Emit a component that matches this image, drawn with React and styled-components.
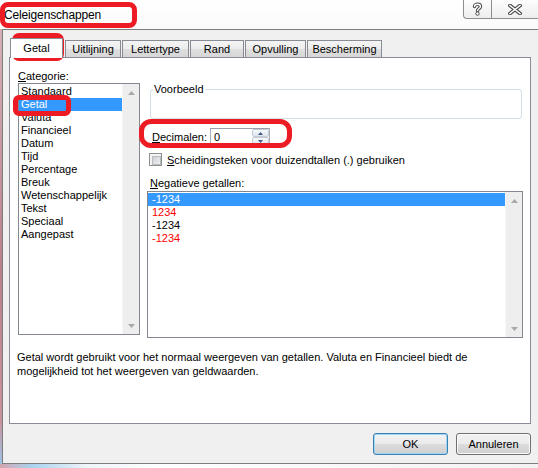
import React from 'react'
import styled, { createGlobalStyle, css } from 'styled-components'

const GlobalStyle = createGlobalStyle`
  * {
    box-sizing: border-box;
  }

  html,
  body {
    margin: 0;
    background: #ffffff;
  }
`

const uiFont = `"Liberation Sans", Arial, sans-serif`

const Screen = styled.div`
  position: relative;
  width: 538px;
  height: 468px;
  overflow: hidden;
  background: #ffffff;
  font-family: ${uiFont};
  font-size: 11px;
  color: #000000;
`

const TitleBar = styled.div`
  height: 29px;
  display: flex;
  justify-content: space-between;
  align-items: flex-start;
  background: linear-gradient(#ffffff, #fafafa);
`

const Title = styled.div`
  padding: 1px 0 0 4px;
  line-height: 28px;
  font-size: 12px;
  letter-spacing: -0.15px;
  color: #000000;
`

const CaptionButtons = styled.div`
  display: flex;
  height: 19px;
`

const CaptionButton = styled.div`
  width: ${({ $width }) => $width}px;
  height: 19px;
  display: flex;
  align-items: center;
  justify-content: center;
  border: 1px solid #8d8d8d;
  border-top: none;
  background: linear-gradient(#fdfdfd, #eeeeee);

  ${({ $first }) =>
    $first
      ? css`
          border-bottom-left-radius: 4px;
        `
      : css`
          border-left: none;
          border-right: none;
        `}
`

const FrameRow = styled.div`
  display: flex;
  height: 435px;
`

const FrameEdge = styled.div`
  width: 2px;
  background: linear-gradient(#d6b0b8, #b9808c 55%, #c8929d 90%, #9fc4e6);
`

const WindowBody = styled.div`
  flex: 1;
  display: flex;
  flex-direction: column;
  padding-left: 6px;
  background: #f0f0f0;
  border-top: 1px solid #7d7d7d;
  border-left: 1px solid #7d7d7d;
  border-bottom: 1px solid #7d7d7d;
`

const TabStrip = styled.div`
  height: 27px;
  display: flex;
  align-items: flex-end;
  padding-left: 1px;
  gap: 1px;
`

const Tab = styled.div`
  width: ${({ $width }) => $width}px;
  height: 17px;
  display: flex;
  align-items: center;
  justify-content: center;
  border: 1px solid #898c95;
  border-bottom: none;
  background: linear-gradient(#f4f4f4, #ececec 50%, #dfdfdf 52%, #d6d6d6);
  white-space: nowrap;

  ${({ $active }) =>
    $active &&
    css`
      position: relative;
      z-index: 1;
      height: 20px;
      margin: 0 1px -1px 0;
      padding-bottom: 1px;
      background: #ffffff;
    `}
`

const TabPanel = styled.div`
  width: 522px;
  height: 367px;
  padding: 11px 0 0 8px;
  background: #ffffff;
  border: 1px solid #898c95;
`

const Columns = styled.div`
  display: flex;
  gap: 7px;
`

const LeftColumn = styled.div`
  width: 122px;
  display: flex;
  flex-direction: column;
`

const RightColumn = styled.div`
  width: 376px;
  display: flex;
  flex-direction: column;
`

const FieldLabel = styled.div`
  line-height: 14px;
  height: 14px;
  margin-left: ${({ $indent }) => $indent || 0}px;
  margin-top: ${({ $top }) => $top || 0}px;
  white-space: nowrap;
`

const ListBox = styled.div`
  width: ${({ $width }) => $width}px;
  height: ${({ $height }) => $height}px;
  margin-top: ${({ $top }) => $top || 0}px;
  display: flex;
  border: 1px solid #828790;
  background: #ffffff;
`

const ListItems = styled.div`
  flex: 1;
  padding-top: 1px;
`

const ListRow = styled.div`
  height: 13px;
  line-height: 13px;
  padding-left: ${({ $indent }) => $indent}px;
  white-space: nowrap;
  color: ${({ $red }) => ($red ? '#ff0000' : '#000000')};

  ${({ $selected }) =>
    $selected &&
    css`
      background: #3399ff;
      color: #ffffff;
    `}
`

const ScrollBar = styled.div`
  width: 17px;
  display: flex;
  flex-direction: column;
  justify-content: space-between;
  background: #eeeeee;
  border-left: 1px solid #f6f6f6;
`

const ScrollArrow = styled.div`
  height: 17px;
  display: flex;
  align-items: center;
  justify-content: center;
`

const GroupBox = styled.fieldset`
  height: 36px;
  margin: 14px 1px 0 3px;
  padding: 0;
  border: 1px solid #d5dfe5;
  border-radius: 3px;

  legend {
    margin-left: 2px;
    padding: 0 1px;
    line-height: 13px;
    font-size: 11px;
  }
`

const DecimalRow = styled.div`
  height: 18px;
  margin-top: 9px;
  display: flex;
  align-items: center;

  label {
    width: 58px;
    margin-left: 5px;
  }
`

const SpinBox = styled.div`
  width: 60px;
  height: 18px;
  display: flex;
  justify-content: space-between;
  border: 1px solid #a9afb8;
  border-top-color: #9aa1ab;
  background: #ffffff;

  span {
    padding-left: 3px;
    line-height: 16px;
  }
`

const SpinButtons = styled.div`
  width: 17px;
  display: flex;
  flex-direction: column;
`

const SpinButton = styled.div`
  height: 8px;
  display: flex;
  align-items: center;
  justify-content: center;
  border: 1px solid #c4cbd6;
  border-radius: 2px;
  background: linear-gradient(#f7f9fc, #dde4ee);
`

const CheckRow = styled.div`
  height: 13px;
  margin-top: 7px;
  display: flex;
  align-items: center;
  gap: 5px;
  padding-left: 2px;
  white-space: nowrap;
`

const CheckBox = styled.div`
  width: 13px;
  height: 13px;
  padding: 2px;
  border: 1px solid #8e8f8f;
  background: #f4f4f4;

  &::after {
    content: '';
    display: block;
    width: 7px;
    height: 7px;
    border: 1px solid #b9bcc1;
    background: linear-gradient(135deg, #cdd0d5, #eff0f2);
  }
`

const Description = styled.p`
  margin: 12px 0 0 -1px;
  line-height: 14px;
  white-space: nowrap;
`

const ButtonRow = styled.div`
  width: 522px;
  margin-top: 9px;
  display: flex;
  justify-content: flex-end;
  gap: 8px;
`

const DialogButton = styled.button`
  width: 75px;
  height: 22px;
  padding: 0;
  font-family: ${uiFont};
  font-size: 11px;
  color: #000000;
  border: 1px solid ${({ $default }) => ($default ? '#3c7fb1' : '#707070')};
  border-radius: 3px;
  background: linear-gradient(#f2f2f2, #ebebeb 48%, #dddddd 50%, #cfcfcf);
  box-shadow: inset 0 0 0 1px ${({ $default }) => ($default ? '#9fd6f3' : '#fbfbfb')};
`

const BottomGlass = styled.div`
  height: 4px;
  background: linear-gradient(to right, #d2a6b0, #a9d3f0 6%, #eef4f8 16%, #ffffff 30%, #f2f2f2);
`

// red annotation marks drawn over the screenshot
const RedMark = styled.div`
  position: absolute;
  left: ${({ $x }) => $x}px;
  top: ${({ $y }) => $y}px;
  width: ${({ $w }) => $w}px;
  height: ${({ $h }) => $h}px;
  border: 5px solid #ed1c24;
  border-radius: ${({ $r }) => $r || 7}px;
  pointer-events: none;
`

const HelpGlyph = () => (
  <svg width="11" height="14" viewBox="0 0 11 14">
    <path
      d="M2.5 4.5 C2.5 1.5 8.5 1.5 8.5 4.5 C8.5 6.5 5.5 6.6 5.5 8.8"
      fill="none"
      stroke="#4a4a4a"
      strokeWidth="3.4"
      strokeLinecap="round"
    />
    <path
      d="M2.5 4.5 C2.5 1.5 8.5 1.5 8.5 4.5 C8.5 6.5 5.5 6.6 5.5 8.8"
      fill="none"
      stroke="#ffffff"
      strokeWidth="1.4"
      strokeLinecap="round"
    />
    <circle cx="5.5" cy="11.6" r="1.7" fill="#ffffff" stroke="#4a4a4a" strokeWidth="1" />
  </svg>
)

const CloseGlyph = () => (
  <svg width="14" height="11" viewBox="0 0 14 11">
    <path d="M2 1.5 L12 9.5 M12 1.5 L2 9.5" stroke="#4a4a4a" strokeWidth="3.6" strokeLinecap="square" />
    <path d="M2 1.5 L12 9.5 M12 1.5 L2 9.5" stroke="#ffffff" strokeWidth="1.6" strokeLinecap="square" />
  </svg>
)

const Arrow = ({ down, color = '#a8a8a8', w = 7, h = 4 }) => (
  <svg width={w} height={h} viewBox={`0 0 ${w} ${h}`}>
    <polygon
      points={down ? `0,0 ${w},0 ${w / 2},${h}` : `0,${h} ${w},${h} ${w / 2},0`}
      fill={color}
    />
  </svg>
)

const categories = [
  'Standaard',
  'Getal',
  'Valuta',
  'Financieel',
  'Datum',
  'Tijd',
  'Percentage',
  'Breuk',
  'Wetenschappelijk',
  'Tekst',
  'Speciaal',
  'Aangepast',
]

const negatives = [
  { text: '-1234', selected: true },
  { text: '1234', red: true },
  { text: '-1234' },
  { text: '-1234', red: true },
]

const tabs = [
  { label: 'Getal', width: 53, active: true },
  { label: 'Uitlijning', width: 56 },
  { label: 'Lettertype', width: 67 },
  { label: 'Rand', width: 54 },
  { label: 'Opvulling', width: 61 },
  { label: 'Bescherming', width: 75 },
]

const Scroller = () => (
  <ScrollBar>
    <ScrollArrow>
      <Arrow />
    </ScrollArrow>
    <ScrollArrow>
      <Arrow down />
    </ScrollArrow>
  </ScrollBar>
)

const App = () => {
  return (
    <Screen>
      <GlobalStyle />
      <TitleBar>
        <Title>Celeigenschappen</Title>
        <CaptionButtons>
          <CaptionButton $width={29} $first>
            <HelpGlyph />
          </CaptionButton>
          <CaptionButton $width={46}>
            <CloseGlyph />
          </CaptionButton>
        </CaptionButtons>
      </TitleBar>

      <FrameRow>
        <FrameEdge />
        <WindowBody>
          <TabStrip>
            {tabs.map((tab) => (
              <Tab key={tab.label} $width={tab.width} $active={tab.active}>
                {tab.label}
              </Tab>
            ))}
          </TabStrip>

          <TabPanel>
            <Columns>
              <LeftColumn>
                <FieldLabel>
                  <u>C</u>ategorie:
                </FieldLabel>
                <ListBox $width={122} $height={252}>
                  <ListItems>
                    {categories.map((item) => (
                      <ListRow key={item} $indent={2} $selected={item === 'Getal'}>
                        {item}
                      </ListRow>
                    ))}
                  </ListItems>
                  <Scroller />
                </ListBox>
              </LeftColumn>

              <RightColumn>
                <GroupBox>
                  <legend>Voorbeeld</legend>
                </GroupBox>

                <DecimalRow>
                  <label>
                    <u>D</u>ecimalen:
                  </label>
                  <SpinBox>
                    <span>0</span>
                    <SpinButtons>
                      <SpinButton>
                        <Arrow color="#3f5a84" w={5} h={3} />
                      </SpinButton>
                      <SpinButton>
                        <Arrow down color="#3f5a84" w={5} h={3} />
                      </SpinButton>
                    </SpinButtons>
                  </SpinBox>
                </DecimalRow>

                <CheckRow>
                  <CheckBox />
                  <span>
                    <u>S</u>cheidingsteken voor duizendtallen (.) gebruiken
                  </span>
                </CheckRow>

                <FieldLabel $indent={3} $top={10}>
                  <u>N</u>egatieve getallen:
                </FieldLabel>
                <ListBox $width={376} $height={147} $top={1}>
                  <ListItems>
                    {negatives.map((row, i) => (
                      <ListRow key={i} $indent={4} $red={row.red} $selected={row.selected}>
                        {row.text}
                      </ListRow>
                    ))}
                  </ListItems>
                  <Scroller />
                </ListBox>
              </RightColumn>
            </Columns>

            <Description>
              Getal wordt gebruikt voor het normaal weergeven van getallen. Valuta en Financieel biedt de
              <br />
              mogelijkheid tot het weergeven van geldwaarden.
            </Description>
          </TabPanel>

          <ButtonRow>
            <DialogButton $default>OK</DialogButton>
            <DialogButton>Annuleren</DialogButton>
          </ButtonRow>
        </WindowBody>
      </FrameRow>
      <BottomGlass />

      <RedMark $x={0} $y={2} $w={137} $h={26} $r={8} />
      <RedMark $x={12} $y={33} $w={52} $h={28} />
      <RedMark $x={13} $y={95} $w={58} $h={21} $r={6} />
      <RedMark $x={139} $y={119} $w={153} $h={29} $r={12} />
    </Screen>
  )
}

export default App
